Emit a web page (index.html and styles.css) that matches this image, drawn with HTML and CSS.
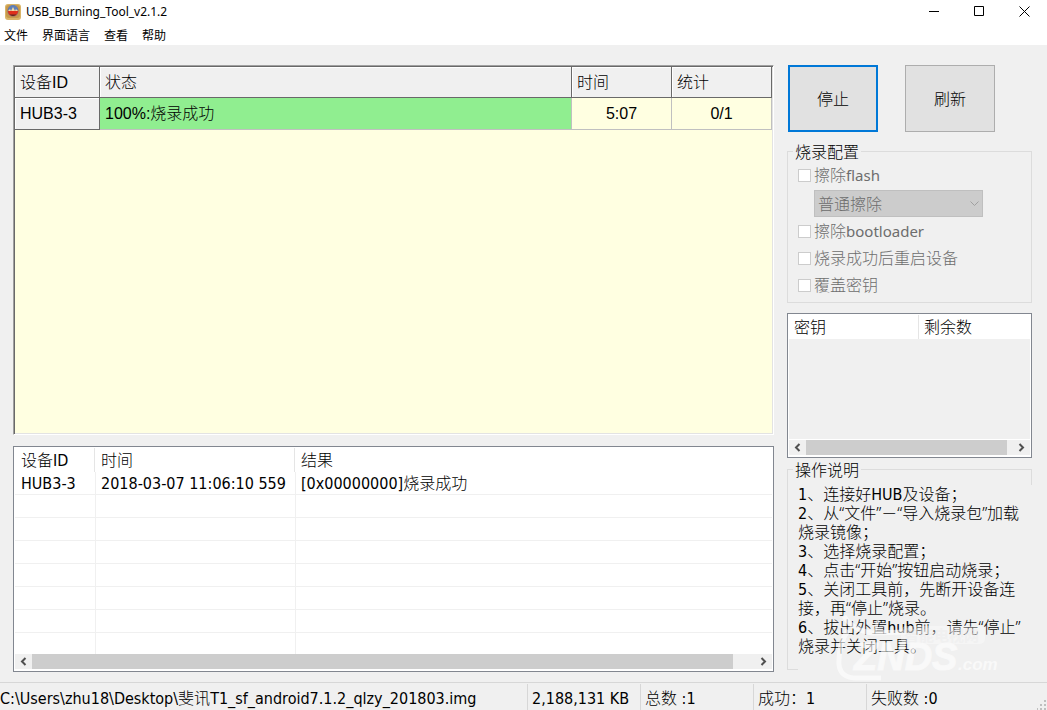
FILE: index.html
```html
<!DOCTYPE html>
<html lang="zh-CN">
<head>
<meta charset="utf-8">
<title>USB_Burning_Tool_v2.1.2</title>
<link rel="stylesheet" href="styles.css">
</head>
<body>
<header class="titlebar">
  <svg class="app-icon" viewBox="0 0 16 16" aria-hidden="true">
    <rect x="0" y="0" width="16" height="16" rx="3" fill="#d9b469"/>
    <rect x="1" y="1" width="14" height="13" rx="3" fill="#c79a4b"/>
    <circle cx="8" cy="7" r="5.6" fill="#8a6a78"/>
    <path d="M3 6a5 5 0 0 1 10 0z" fill="#5f7fb8"/>
    <path d="M3 7l2-2 1 2 2-4 2 4 1-2 2 2z" fill="#f3d9a0"/>
    <path d="M3 7h10a5 5 0 0 1-10 0z" fill="#e0301c"/>
    <path d="M4.500 10.500h7a5 5 0 0 1-7 0z" fill="#5a2a20"/>
  </svg>
  <h1 class="title">USB_Burning_Tool_v2.1.2</h1>
  <div class="window-controls">
    <button class="window-button" type="button" aria-label="最小化"><svg width="11" height="11" viewBox="0 0 11 11"><path d="M0 5.500h10" stroke="#000" fill="none"/></svg></button>
    <button class="window-button" type="button" aria-label="最大化"><svg width="11" height="11" viewBox="0 0 11 11"><path d="M.5.5h9v9h-9z" stroke="#000" fill="none"/></svg></button>
    <button class="window-button" type="button" aria-label="关闭"><svg width="11" height="11" viewBox="0 0 11 11"><path d="M.5.5l10 10M10.500.5l-10 10" stroke="#000" fill="none"/></svg></button>
  </div>
</header>
<nav class="menubar">
  <button class="menu" type="button">文件</button>
  <button class="menu" type="button">界面语言</button>
  <button class="menu" type="button">查看</button>
  <button class="menu" type="button">帮助</button>
</nav>

<main class="workspace">
  <div class="primary">
    <section class="device-grid">
      <table class="device-table">
        <colgroup><col class="col-device"><col><col class="col-small"><col class="col-small"></colgroup>
        <thead><tr><th>设备ID</th><th>状态</th><th>时间</th><th>统计</th></tr></thead>
        <tbody><tr><th scope="row">HUB3-3</th><td class="done">100%:烧录成功</td><td class="number">5:07</td><td class="number">0/1</td></tr></tbody>
      </table>
    </section>

    <section class="list-box">
      <table class="log-table">
        <colgroup><col class="col-id"><col class="col-time"><col></colgroup>
        <thead><tr><th>设备<span class="latin">ID</span></th><th>时间</th><th>结果</th></tr></thead>
        <tbody>
          <tr><td><span class="latin">HUB3-3</span></td><td><span class="latin">2018-03-07 11:06:10 559</span></td><td><span class="latin">[0x00000000]</span>烧录成功</td></tr>
          <tr><td></td><td></td><td></td></tr>
          <tr><td></td><td></td><td></td></tr>
          <tr><td></td><td></td><td></td></tr>
          <tr><td></td><td></td><td></td></tr>
          <tr><td></td><td></td><td></td></tr>
          <tr><td></td><td></td><td></td></tr>
          <tr class="partial"><td></td><td></td><td></td></tr>
        </tbody>
      </table>
      <div class="scrollbar">
        <button class="scroll-arrow" type="button" aria-label="向左滚动"><svg width="7" height="9" viewBox="0 0 7 9"><path d="M5.500 1L2 4.500 5.500 8" fill="none" stroke="#505050" stroke-width="2"/></svg></button>
        <div class="track"><div class="thumb"></div></div>
        <button class="scroll-arrow" type="button" aria-label="向右滚动"><svg width="7" height="9" viewBox="0 0 7 9"><path d="M1.500 1L5 4.500 1.500 8" fill="none" stroke="#505050" stroke-width="2"/></svg></button>
      </div>
    </section>
  </div>

  <aside class="side">
    <div class="actions">
      <button class="action focused" type="button">停止</button>
      <button class="action" type="button">刷新</button>
    </div>

    <fieldset class="group config">
      <legend>烧录配置</legend>
      <div class="options">
        <label class="option"><input type="checkbox" disabled>擦除<span class="latin-ui">flash</span></label>
        <div class="select-wrap">
          <select class="erase-mode" aria-label="擦除方式" disabled><option>普通擦除</option></select>
          <svg class="chevron" width="9" height="6" viewBox="0 0 9 6" aria-hidden="true"><path d="M.5.5l4 4 4-4" fill="none" stroke="#a0a0a0"/></svg>
        </div>
        <label class="option"><input type="checkbox" disabled>擦除<span class="latin-ui">bootloader</span></label>
        <label class="option"><input type="checkbox" disabled>烧录成功后重启设备</label>
        <label class="option"><input type="checkbox" disabled>覆盖密钥</label>
      </div>
    </fieldset>

    <section class="list-box key-box">
      <table class="key-table">
        <colgroup><col class="col-key"><col></colgroup>
        <thead><tr><th>密钥</th><th>剩余数</th></tr></thead>
      </table>
      <div class="key-area"></div>
      <div class="scrollbar">
        <button class="scroll-arrow" type="button" aria-label="向左滚动"><svg width="7" height="9" viewBox="0 0 7 9"><path d="M5.500 1L2 4.500 5.500 8" fill="none" stroke="#505050" stroke-width="2"/></svg></button>
        <div class="track"><div class="thumb"></div></div>
        <button class="scroll-arrow" type="button" aria-label="向右滚动"><svg width="7" height="9" viewBox="0 0 7 9"><path d="M1.500 1L5 4.500 1.500 8" fill="none" stroke="#505050" stroke-width="2"/></svg></button>
      </div>
    </section>

    <fieldset class="group help">
      <legend>操作说明</legend>
      <div class="help-text">
        <p><span class="latin">1</span>、连接好<span class="latin">HUB</span>及设备；</p>
        <p><span class="latin">2</span>、从“文件”－“导入烧录包”加载<br>烧录镜像；</p>
        <p><span class="latin">3</span>、选择烧录配置；</p>
        <p><span class="latin">4</span>、点击“开始”按钮启动烧录；</p>
        <p><span class="latin">5</span>、关闭工具前，先断开设备连<br>接，再“停止”烧录。</p>
        <p><span class="latin">6</span>、拔出外置<span class="latin">hub</span>前，请先“停止”<br>烧录并关闭工具。</p>
      </div>
      <svg class="watermark" viewBox="0 0 170 70" aria-hidden="true">
        <path d="M8 3q8 14 28 17l34-1M12 17Q2 32 3 52q2 14 20 13h22" fill="none" stroke="#fff" stroke-width="5"/>
        <path d="M42 7l-3 12" stroke="#fff" stroke-width="3"/>
        <rect x="65" y="13" width="84" height="18" rx="5" fill="#fff" opacity=".6"/>
        <text class="mark-cn" x="68" y="28">智能电视网</text>
        <text class="mark-brand" x="18" y="57">ZNDS</text>
        <text class="mark-domain" x="122" y="57">.com</text>
      </svg>
    </fieldset>
  </aside>
</main>

<footer class="statusbar">
  <div class="status path"><span class="latin">C:\Users\zhu18\Desktop\</span>斐讯<span class="latin">T1_sf_android7.1.2_qlzy_201803.img</span></div>
  <div class="status"><span class="latin">2,188,131 KB</span></div>
  <div class="status">总数<span class="latin">&nbsp;:1</span></div>
  <div class="status">成功：<span class="latin">1</span></div>
  <div class="status last">失败数<span class="latin">&nbsp;:0</span></div>
  <svg class="grip" width="10" height="10" viewBox="0 0 10 10" aria-hidden="true"><path d="M7 0h2v2h-2zM7 4h2v2h-2zM7 8h2v2h-2zM3 4h2v2h-2zM3 8h2v2h-2zM0 8h1v2h-1z" fill="#bfbfbf"/></svg>
</footer>
</body>
</html>
```
FILE: styles.css
```css
* { box-sizing: border-box; }

body {
  margin: 0;
  min-height: 100vh;
  display: flex;
  flex-direction: column;
  background: #f0f0f0;
  color: #000;
  font: 300 16px/19px "Noto Sans", "Noto Sans CJK SC", sans-serif;
}

button, select, input { font: inherit; color: inherit; }
.latin { font-family: "DejaVu Sans Condensed", "Noto Sans", sans-serif; font-weight: 400; }
.latin-ui { font-size: 15px; font-weight: 400; }

/* Title bar and menu */
.titlebar { display: flex; align-items: center; height: 24px; padding-left: 5px; background: #fff; }
.app-icon { width: 16px; height: 16px; }
.title { flex: 1; margin: 0 0 0 5px; font-size: 12px; font-weight: 400; line-height: 24px; }
.window-controls { display: flex; align-self: flex-start; }
.window-button { display: grid; place-items: center; width: 45px; height: 23px; padding: 0; border: 0; background: none; }
.menubar { display: flex; gap: 14px; height: 21px; padding: 2px 0 0 4px; background: #fff; }
.menu { padding: 0; border: 0; background: none; font-size: 12px; line-height: 19px; font-weight: 400; }

/* Main layout */
.workspace { flex: 1; display: flex; gap: 13px; padding: 20px 15px 10px 13px; }
.primary { flex: 1; min-width: 0; display: flex; flex-direction: column; gap: 11px; }
.side { width: 245px; display: flex; flex-direction: column; }

table { width: 100%; table-layout: fixed; border-collapse: separate; border-spacing: 0; }
th, td { padding: 0; text-align: left; font-weight: inherit; white-space: nowrap; }

/* Device progress grid */
.device-grid {
  flex: 1;
  border: 1px solid;
  border-color: #a0a0a0 #fff #fff #a0a0a0;
  background: #ffffe1;
  box-shadow: inset 1px 1px #696969, inset -1px -1px #e3e3e3;
  padding: 1px;
  font-family: "Liberation Sans", "Noto Sans CJK SC", sans-serif;
}
.device-table th, .device-table td { height: 32px; padding-left: 5px; border-right: 1px solid #c0c0c0; border-bottom: 1px solid #c0c0c0; }
.device-table th { background: #f0f0f0; border-color: #696969; box-shadow: inset 1px 1px #fff; }
.device-table thead th { height: 31px; }
.device-table .done { background: #90ee90; }
.device-table .number { padding: 0; text-align: center; }
.col-device { width: 85px; }
.col-small { width: 100px; }

/* List views */
.list-box { border: 1px solid #828790; padding: 1px; background: #fff; }
.log-table th { height: 24px; padding-left: 6px; border-right: 1px solid #e5e5e5; }
.log-table th:last-child { border-right: 0; }
.log-table td { height: 23px; padding-left: 5px; border-left: 1px solid #f0f0f0; border-bottom: 1px solid #f0f0f0; }
.log-table td:first-child { padding-left: 6px; border-left: 0; }
.log-table .partial td { height: 21px; border-bottom: 0; }
.col-id { width: 80px; }
.col-time { width: 200px; }

.scrollbar { display: flex; height: 15px; margin-bottom: 1px; background: #f0f0f0; }
.scroll-arrow { display: grid; place-items: center; width: 17px; padding: 0; border: 0; background: none; }
.track { flex: 1; }
.thumb { width: 97%; height: 100%; background: #cdcdcd; }

.key-box { display: flex; flex-direction: column; margin-top: 10px; }
.key-table th { height: 24px; padding-left: 5px; border-right: 1px solid #e5e5e5; }
.key-table th:last-child { border-right: 0; }
.col-key { width: 130px; }
.key-area { height: 100px; margin-bottom: 1px; background: #f0f0f0; }

/* Buttons and groups */
.actions { display: flex; gap: 27px; padding-left: 1px; }
.action { width: 90px; height: 67px; padding: 2px 0 0; border: 1px solid #adadad; background: #e1e1e1; }
.action.focused { border: 2px solid #0078d7; }

.group { margin: 0; min-width: 0; border: 1px solid #dcdcdc; padding: 0; }
.group legend { height: 19px; margin-left: 5px; padding: 0 2px; line-height: 21px; }
.config { margin-top: 10px; }
.options { padding: 1px 0 3px 10px; }
.option { display: flex; align-items: center; height: 27px; color: #6d6d6d; }
.option input { appearance: none; width: 13px; height: 13px; margin: 0 3px 0 0; border: 1px solid #ccc; background: #fff; }
.select-wrap { position: relative; width: 169px; margin: 1px 0 1px 16px; }
.erase-mode { display: block; appearance: none; width: 100%; height: 27px; padding: 1px 3px 0; border: 1px solid #bfbfbf; border-radius: 0; background: #ccc; color: #6d6d6d; opacity: 1; }
.chevron { position: absolute; right: 4px; top: 11px; }

.help { position: relative; flex: 1; display: flex; margin: 2px 0; padding: 6px 0 0; }
.help-text { flex: 1; margin: 0 -1px -1px 10px; padding-bottom: 14px; background: #f0f0f0; white-space: nowrap; }
.help-text p { margin: 0; }
.watermark { position: absolute; left: 48px; top: 134px; width: 170px; height: 70px; opacity: .6; }
.mark-cn { font: 700 15px "Noto Sans CJK SC", sans-serif; fill: #f0f0f0; }
.mark-brand { font: italic 700 38px "Liberation Sans", sans-serif; fill: #fff; stroke: #fff; }
.mark-domain { font: italic 700 17px "Liberation Sans", sans-serif; fill: #fff; }

/* Status bar */
.statusbar { position: relative; display: flex; height: 28px; padding-top: 1px; border-top: 1px solid #d7d7d7; }
.status { width: 113px; padding-left: 4px; border-right: 1px solid #d7d7d7; line-height: 28px; white-space: nowrap; }
.status.path { flex: 1; min-width: 0; padding-left: 0; overflow: hidden; }
.status.last { width: 180px; border-right: 0; }
.grip { position: absolute; right: 0; bottom: 0; }
```
